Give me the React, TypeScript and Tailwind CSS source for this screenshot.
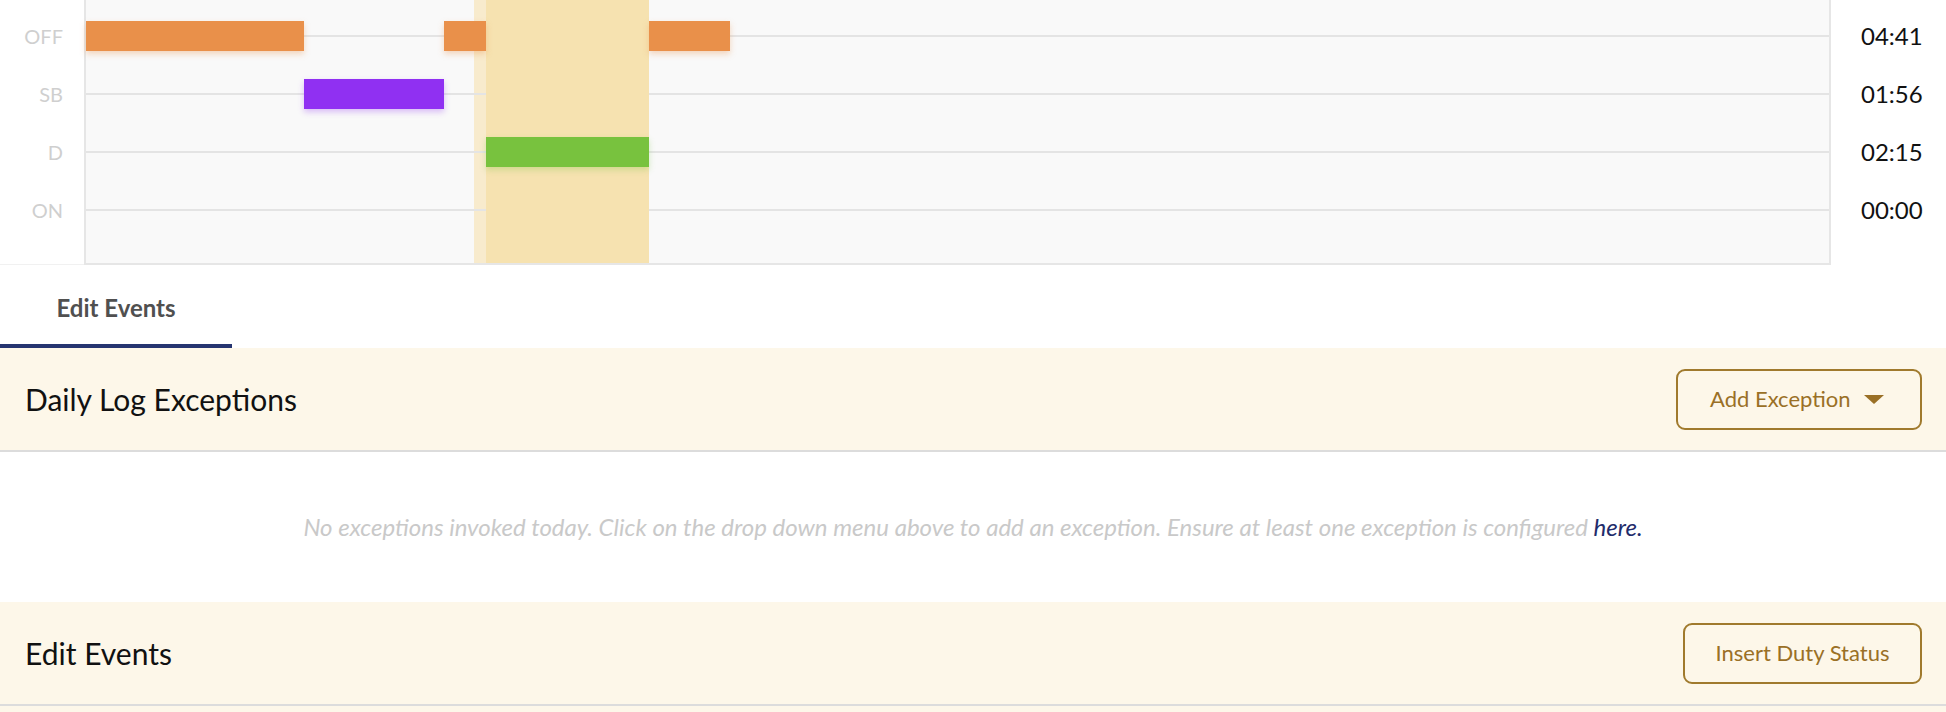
const lanes = ["OFF", "SB", "D", "ON"];
const totals = ["04:41", "01:56", "02:15", "00:00"];

const segments = [
  { lane: 0, left: 0, width: 218, cls: "bg-[#e9904a] shadow-[0_3px_6px_rgba(233,144,74,0.35)]" },
  { lane: 1, left: 218, width: 140, cls: "bg-[#9030f2] shadow-[0_3px_6px_rgba(144,48,242,0.3)]" },
  { lane: 0, left: 358, width: 42, cls: "bg-[#e9904a] shadow-[0_3px_6px_rgba(233,144,74,0.35)]" },
  { lane: 2, left: 400, width: 163, cls: "bg-[#78c23e] shadow-[0_3px_6px_rgba(120,194,62,0.3)]" },
  { lane: 0, left: 563, width: 81, cls: "bg-[#e9904a] shadow-[0_3px_6px_rgba(233,144,74,0.35)]" },
];

function Chart() {
  return (
    <div className="flex h-[265px] bg-white">
      <div className="w-[84px] pt-[7px] border-b border-[#f1f1f1]">
        {lanes.map((l) => (
          <div key={l} className="flex h-[58px] items-center justify-end pr-[21px] text-[20px] leading-none text-[#cfcfcf]">
            {l}
          </div>
        ))}
      </div>
      <div className="relative flex-1 border-x-2 border-b-2 border-[#e6e6e6] bg-[#f9f9f9]">
        <div className="absolute top-0 bottom-0 left-[388px] w-[12px] bg-[#f8ebcd]" />
        <div className="relative pt-[7px]">
          {lanes.map((l) => (
            <div key={l} className="flex h-[58px] items-center">
              <div className="h-[2px] w-full bg-[#e4e4e4]" />
            </div>
          ))}
        </div>
        <div className="absolute top-0 bottom-0 left-[400px] w-[163px] bg-[#f6e2b0]" />
        {segments.map((s, i) => (
          <div
            key={i}
            className={`absolute h-[30px] ${s.cls}`}
            style={{ left: s.left, width: s.width, top: 21 + s.lane * 58 }}
          />
        ))}
      </div>
      <div className="w-[115px] pl-[30px] pt-[7px]">
        {totals.map((t) => (
          <div key={t} className="flex h-[58px] items-center text-[24px] leading-none text-[#111]">
            {t}
          </div>
        ))}
      </div>
    </div>
  );
}

function OutlineButton({ children, className }: { children: React.ReactNode; className?: string }) {
  return (
    <button
      className={`flex h-[61px] items-center whitespace-nowrap rounded-[9px] border-2 border-[#a07a2d] text-[22px] leading-none text-[#9a7026] ${className ?? ""}`}
    >
      {children}
    </button>
  );
}

function SectionHeader({ title, action }: { title: string; action: React.ReactNode }) {
  return (
    <div className="flex h-[104px] items-center justify-between border-b-2 border-[#dcdcdc] bg-[#fdf7e9] pl-[25px] pr-[24px]">
      <h2 className="text-[30px] leading-[1.2] font-normal text-[#111]">{title}</h2>
      {action}
    </div>
  );
}

export default function App() {
  return (
    <div className="w-[1946px] bg-white font-['Lato',sans-serif]">
      <Chart />
      <div className="flex h-[83px] bg-white">
        <div className="flex h-full w-[232px] justify-center border-b-4 border-[#263570] pt-[29px]">
          <span className="text-[24px] leading-[1.2] font-bold text-[#505050]">Edit Events</span>
        </div>
      </div>
      <div className="shadow-[inset_0_3px_3px_-2px_rgba(0,0,0,0.12)]">
        <SectionHeader
          title="Daily Log Exceptions"
          action={
            <OutlineButton className="w-[246px] pl-[32px] gap-[13px]">
              <span>Add Exception</span>
              <svg width="20" height="10" viewBox="0 0 20 10" className="mt-[1px]">
                <polygon points="0,0 20,0 10,9" fill="#9a7026" />
              </svg>
            </OutlineButton>
          }
        />
      </div>
      <div className="flex h-[150px] items-center justify-center bg-white">
        <p className="text-[24px] italic leading-[1.2] text-[#c9c9c9]">
          No exceptions invoked today. Click on the drop down menu above to add an exception. Ensure at least one
          exception is configured <a className="text-[#1f2c6b]">here.</a>
        </p>
      </div>
      <SectionHeader
        title="Edit Events"
        action={<OutlineButton className="w-[239px] justify-center">Insert Duty Status</OutlineButton>}
      />
      <div className="h-[10px] bg-[#fdf7e9]" />
    </div>
  );
}
